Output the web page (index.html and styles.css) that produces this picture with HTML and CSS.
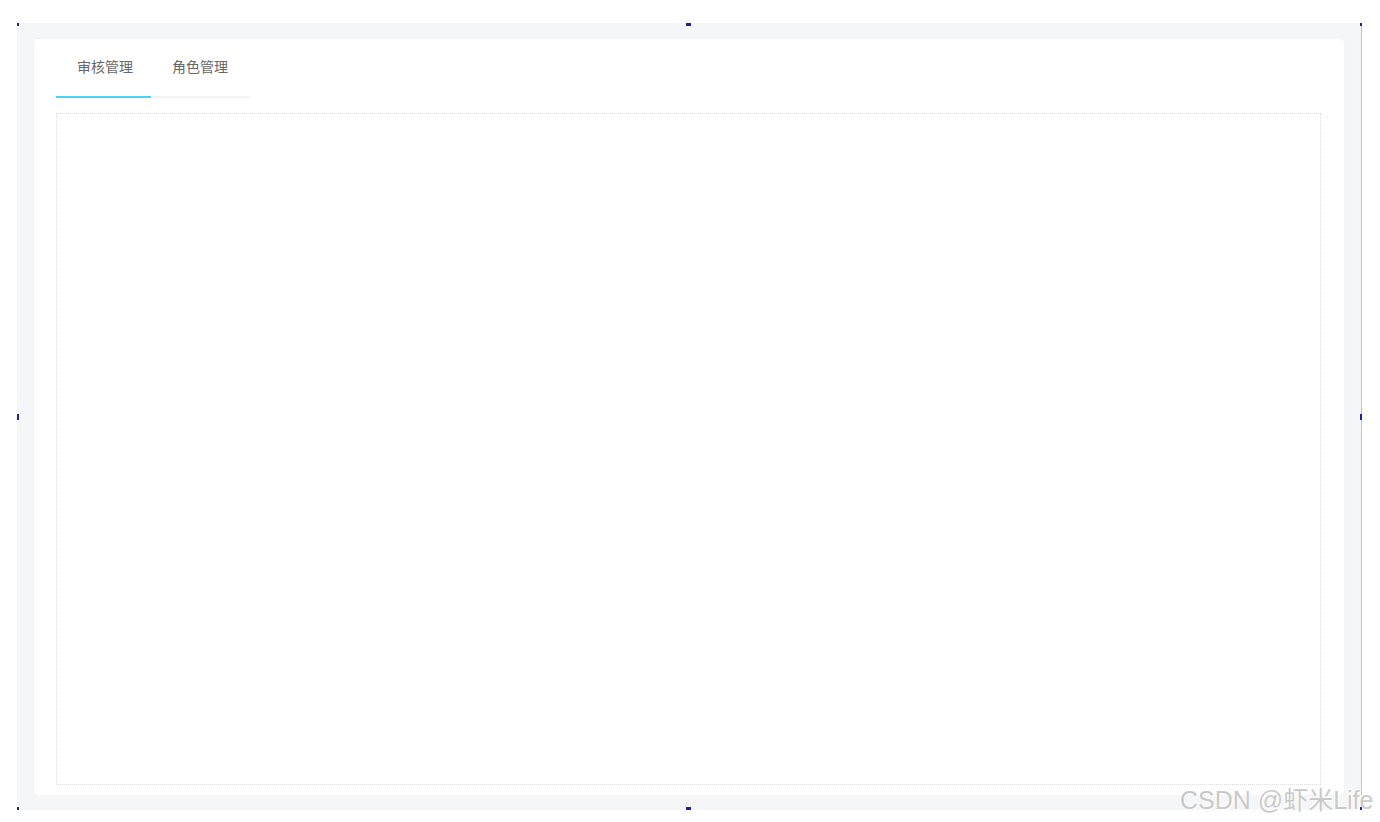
FILE: index.html
```html
<!DOCTYPE html>
<html lang="zh-CN">
<head>
    <meta charset="UTF-8">
    <meta name="viewport" content="width=device-width, initial-scale=1.0">
    <title>审核管理</title>
    <link rel="stylesheet" href="styles.css">
</head>
<body>
    <div class="frame">
        <span class="handle h-tl"></span>
        <span class="handle h-tm"></span>
        <span class="handle h-tr"></span>
        <span class="handle h-ml"></span>
        <span class="handle h-mr"></span>
        <span class="handle h-bl"></span>
        <span class="handle h-bm"></span>
        <span class="handle h-br"></span>
        <div class="card">
            <nav class="tabs">
                <div class="tab active">审核管理</div>
                <div class="tab">角色管理</div>
            </nav>
            <div class="panel"></div>
        </div>
    </div>
    <div class="watermark">CSDN @虾米Life</div>
</body>
</html>
```

FILE: styles.css
```css
body {
    margin: 0;
    background-color: #fff;
    font-family: "Noto Sans CJK SC", "Noto Sans", sans-serif;
}

.frame {
    position: relative;
    box-sizing: border-box;
    width: 1345px;
    height: 787px;
    margin: 23px 0 0 17px;
    padding: 15px 16px 14px 16px;
    background-color: #f5f6f8;
    border-right: 1px solid #c4c4c4;
}

.handle {
    position: absolute;
    width: 5px;
    height: 3px;
    background-color: #1f1fa6;
}
.handle.h-tl { left: 0; top: 0; width: 2px; }
.handle.h-tm { left: 669px; top: 0; }
.handle.h-tr { right: -1px; top: 0; width: 2px; }
.handle.h-ml { left: 0; top: 391px; width: 2px; height: 6px; }
.handle.h-mr { right: -1px; top: 391px; width: 2px; height: 6px; }
.handle.h-bl { left: 0; bottom: 0; width: 2px; }
.handle.h-bm { left: 669px; bottom: 0; }
.handle.h-br { right: -1px; bottom: 0; width: 2px; }

.card {
    box-sizing: border-box;
    height: 100%;
    padding: 0 23px 10px 22px;
    background-color: #fff;
    border: 1px dotted #e8e8e8;
    border-radius: 6px;
    display: flex;
    flex-direction: column;
}

.tabs {
    display: flex;
    width: 194px;
    border-bottom: 2px solid #f3f3f3;
}

.tab {
    padding: 18px 18px 21px 21px;
    font-size: 14px;
    line-height: 18px;
    color: #666;
    margin-bottom: -2px;
    border-bottom: 2px solid transparent;
}
.tab.active {
    border-bottom-color: #4dd2f7;
}

.panel {
    flex: 1;
    margin-top: 15px;
    border: 1px dotted #dcdcdc;
}

.watermark {
    position: absolute;
    left: 1180px;
    top: 780px;
    font-family: "Liberation Sans", "Noto Sans CJK SC", sans-serif;
    font-size: 25px;
    color: #c9c9c9;
    text-shadow: 0 0 1px #fff, 1px 1px 0 #fff, -1px -1px 0 #fff;
    white-space: nowrap;
}
```
